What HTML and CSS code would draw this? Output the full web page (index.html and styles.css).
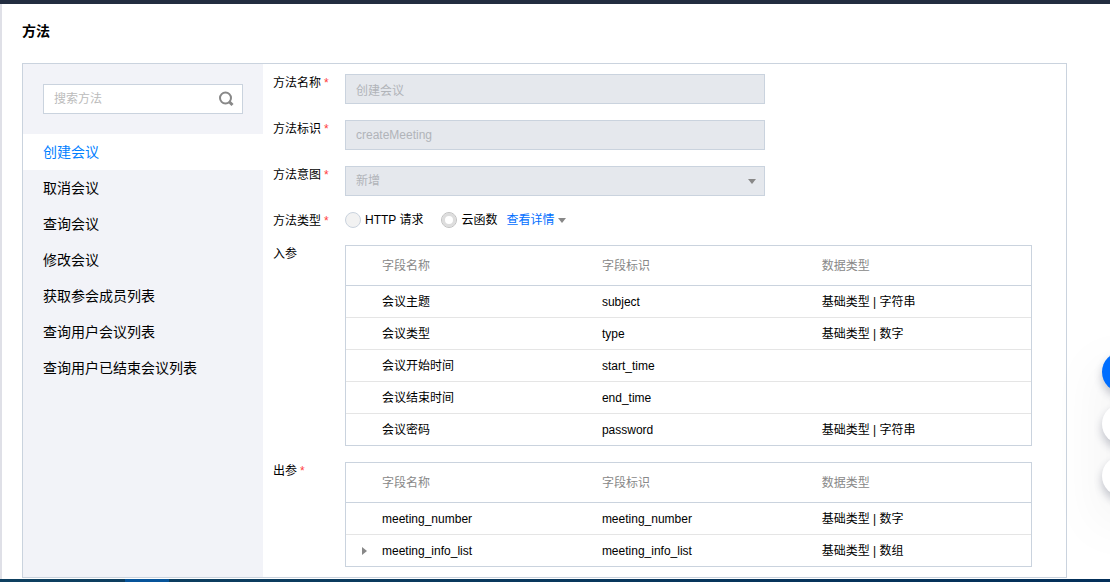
FILE: index.html
```html
<!DOCTYPE html>
<html lang="zh-CN">
<head>
<meta charset="utf-8">
<meta name="viewport" content="width=device-width, initial-scale=1">
<title>方法</title>
<link rel="stylesheet" href="styles.css">
</head>
<body class="app">
<div class="topbar"></div>
<main class="page">
  <h1 class="page-title">方法</h1>
  <section class="panel">
    <aside class="sidebar">
      <div class="search">
        <input class="search-input" type="text" placeholder="搜索方法" aria-label="搜索方法">
        <button class="search-button" type="button" aria-label="搜索">
          <svg width="16" height="16" viewBox="0 0 16 16" fill="none" stroke="#888" stroke-width="2"><circle cx="7.500" cy="7" r="5.500"/><path d="M11 10.500l3.500 3.500" stroke-width="3"/></svg>
        </button>
      </div>
      <nav class="menu">
        <a class="menu-item menu-item-active" href="#">创建会议</a>
        <a class="menu-item" href="#">取消会议</a>
        <a class="menu-item" href="#">查询会议</a>
        <a class="menu-item" href="#">修改会议</a>
        <a class="menu-item" href="#">获取参会成员列表</a>
        <a class="menu-item" href="#">查询用户会议列表</a>
        <a class="menu-item" href="#">查询用户已结束会议列表</a>
      </nav>
    </aside>
    <form class="form">
      <div class="row">
        <label class="label" for="name">方法名称<span class="required">*</span></label>
        <input class="field" id="name" type="text" value="创建会议" disabled>
      </div>
      <div class="row">
        <label class="label" for="ident">方法标识<span class="required">*</span></label>
        <input class="field" id="ident" type="text" value="createMeeting" disabled>
      </div>
      <div class="row">
        <label class="label" for="intent">方法意图<span class="required">*</span></label>
        <div class="select-wrap">
          <select class="field" id="intent" disabled><option>新增</option></select>
          <svg class="select-caret" width="8" height="5" viewBox="0 0 8 5"><path d="M0 0h8L4 5z" fill="#888"/></svg>
        </div>
      </div>
      <div class="row">
        <span class="label" id="kind">方法类型<span class="required">*</span></span>
        <div class="radios" role="radiogroup" aria-labelledby="kind">
          <label class="radio-label"><input class="radio" type="radio" name="kind" disabled>HTTP 请求</label>
          <label class="radio-label"><input class="radio" type="radio" name="kind" checked disabled>云函数</label>
          <a class="detail-link" href="#">查看详情<svg width="8" height="5" viewBox="0 0 8 5"><path d="M0 0h8L4 5z" fill="#888"/></svg></a>
        </div>
      </div>
      <div class="row">
        <span class="label">入参</span>
        <table class="table" aria-label="入参">
          <thead><tr><th class="col-toggle"></th><th class="col-text">字段名称</th><th class="col-text">字段标识</th><th>数据类型</th></tr></thead>
          <tbody>
            <tr><td></td><td>会议主题</td><td>subject</td><td>基础类型 | 字符串</td></tr>
            <tr><td></td><td>会议类型</td><td>type</td><td>基础类型 | 数字</td></tr>
            <tr><td></td><td>会议开始时间</td><td>start_time</td><td></td></tr>
            <tr><td></td><td>会议结束时间</td><td>end_time</td><td></td></tr>
            <tr><td></td><td>会议密码</td><td>password</td><td>基础类型 | 字符串</td></tr>
          </tbody>
        </table>
      </div>
      <div class="row">
        <span class="label">出参<span class="required">*</span></span>
        <table class="table" aria-label="出参">
          <thead><tr><th class="col-toggle"></th><th class="col-text">字段名称</th><th class="col-text">字段标识</th><th>数据类型</th></tr></thead>
          <tbody>
            <tr><td></td><td>meeting_number</td><td>meeting_number</td><td>基础类型 | 数字</td></tr>
            <tr><td><button class="toggle" type="button" aria-label="展开"><svg width="5" height="8" viewBox="0 0 5 8"><path d="M0 0v8l5-4z" fill="#888"/></svg></button></td><td>meeting_info_list</td><td>meeting_info_list</td><td>基础类型 | 数组</td></tr>
          </tbody>
        </table>
      </div>
    </form>
  </section>
</main>
<div class="taskbar"><div class="taskbar-active"></div></div>
<div class="float-tools">
  <button class="float-button float-button-primary" type="button" aria-label="咨询"></button>
  <button class="float-button" type="button" aria-label="反馈"></button>
  <button class="float-button" type="button" aria-label="文档"></button>
</div>
</body>
</html>
```
FILE: styles.css
```css
* {
  box-sizing: border-box;
}

.app {
  margin: 0;
  min-height: 100vh;
  display: flex;
  flex-direction: column;
  overflow-x: hidden;
  background: #fff;
  color: #000;
  font: 12px/16px "Liberation Sans", "Noto Sans CJK SC", sans-serif;
}

.app input,
.app select,
.app button {
  font: inherit;
}

.topbar {
  height: 4px;
  background: #222d40;
}

.page {
  flex: 1;
  display: flex;
  flex-direction: column;
  padding: 17px 43px 1px 20px;
  border-left: 2px solid #dfe0e7;
}

.page-title {
  margin: 0 0 22px;
  font-size: 14px;
  line-height: 20px;
  font-weight: 700;
}

.panel {
  flex: 1;
  display: flex;
  border: 1px solid #cad3de;
}

.sidebar {
  flex: none;
  width: 240px;
  background: #f2f3f8;
}

.search {
  display: flex;
  height: 30px;
  margin: 20px;
  border: 1px solid #cad3de;
  background: #fff;
}

.search-input {
  flex: 1;
  min-width: 0;
  padding: 0 10px;
  border: 0;
  outline: 0;
  background: none;
}

.search-input::placeholder {
  color: #bbb;
}

.search-button {
  display: flex;
  align-items: center;
  justify-content: center;
  width: 32px;
  padding: 0;
  border: 0;
  background: none;
}

.menu-item {
  display: block;
  padding: 0 20px;
  color: #000;
  font-size: 14px;
  line-height: 36px;
  text-decoration: none;
}

.menu-item-active {
  background: #fff;
  color: #0080ff;
}

.form {
  flex: 1;
  min-width: 0;
  display: flex;
  flex-direction: column;
  gap: 16px;
  padding: 10px 34px 10px 10px;
}

.row {
  display: flex;
  align-items: flex-start;
}

.label {
  flex: none;
  width: 72px;
  padding-top: 1px;
}

.required {
  margin-left: 3px;
  color: #ff4040;
}

.field {
  display: block;
  width: 420px;
  max-width: 100%;
  height: 30px;
  padding: 0 10px;
  border: 1px solid #cad3de;
  border-radius: 0;
  background: #e5e8ed;
  color: #b1b4b9;
  opacity: 1;
  appearance: none;
}

.select-wrap {
  position: relative;
}

.select-caret {
  position: absolute;
  top: 13px;
  right: 9px;
}

.radios {
  display: flex;
  align-items: center;
}

.radio-label {
  display: flex;
  align-items: center;
  gap: 4px;
  margin-right: 18px;
}

.radio-label + .radio-label {
  margin-right: 9px;
}

.radio {
  width: 16px;
  height: 16px;
  margin: 0;
  border: 1px solid #cad3de;
  border-radius: 50%;
  background: #f2f2f2;
  appearance: none;
}

.radio:checked {
  border-color: #c2c2c2;
  background: #fff;
  box-shadow: inset 0 0 0 3px #ddd;
}

.detail-link {
  display: flex;
  align-items: center;
  gap: 4px;
  color: #006eff;
  text-decoration: none;
}

.table {
  flex: 1;
  table-layout: fixed;
  border: 1px solid #cad3de;
  border-spacing: 0;
}

.table th,
.table td {
  height: 32px;
  padding: 0;
  border-top: 1px solid #e5e5e5;
  text-align: left;
  font-weight: 400;
}

.table th {
  height: 39px;
  padding-top: 1px;
  border-top: 0;
  color: #888;
}

.table tbody tr:first-child td {
  border-top-color: #cad3de;
}

.table .col-toggle {
  width: 36px;
}

.table .col-text {
  width: 32.1%;
}

.toggle {
  display: flex;
  margin-left: 16px;
  padding: 0;
  border: 0;
  background: none;
}

.taskbar {
  display: flex;
  height: 3px;
  padding-left: 125px;
  background: linear-gradient(90deg, #0e4060, #032f59);
}

.taskbar-active {
  width: 44px;
  background: #07549a;
}

.float-tools {
  position: fixed;
  right: -32px;
  bottom: 86px;
  display: flex;
  flex-direction: column;
  gap: 12px;
  filter: drop-shadow(0 20px 25px rgba(0, 0, 0, 0.08));
}

.float-button {
  width: 40px;
  height: 40px;
  padding: 0;
  border: 0;
  border-radius: 50%;
  background: #fff;
  box-shadow: 0 5px 10px rgba(55, 62, 90, 0.3);
}

.float-button-primary {
  background: #006eff;
}
```
